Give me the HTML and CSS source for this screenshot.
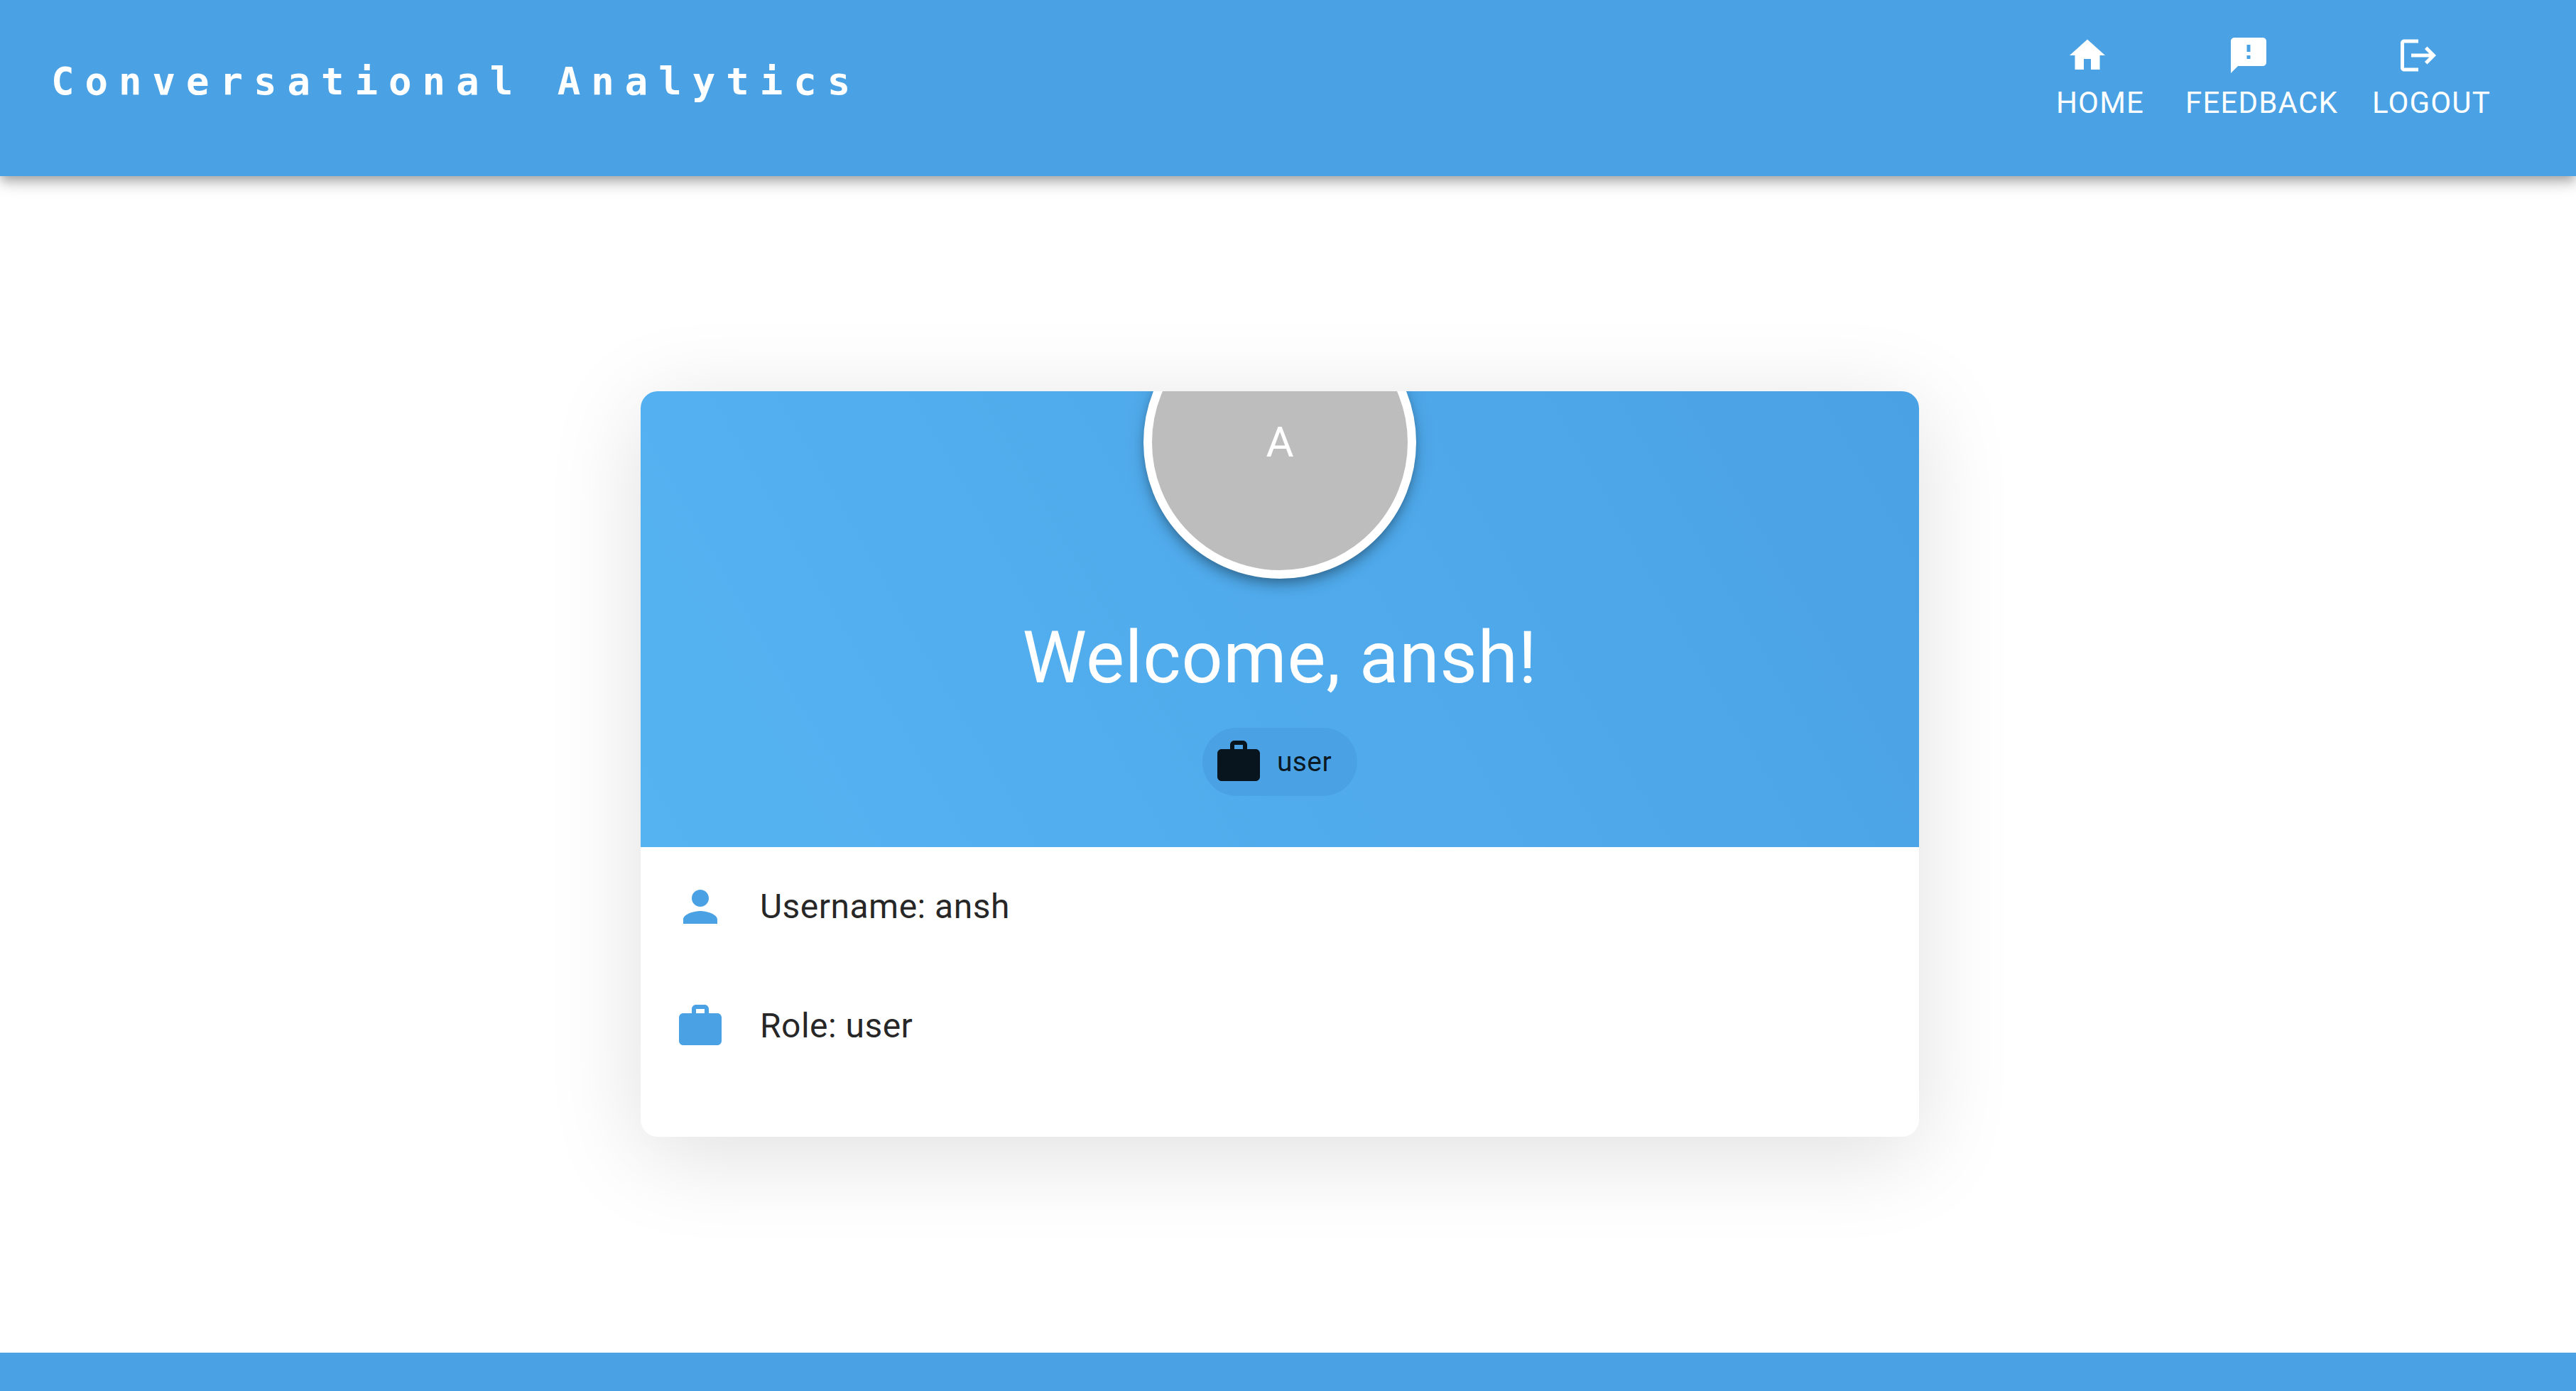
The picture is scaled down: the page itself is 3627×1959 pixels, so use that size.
FILE: index.html
```html
<!DOCTYPE html>
<html lang="en">
<head>
<meta charset="utf-8">
<meta name="viewport" content="width=device-width, initial-scale=1">
<title>Conversational Analytics</title>
<link rel="stylesheet" href="styles.css">
</head>
<body>
<header class="app-bar">
  <a class="brand" href="#">Conversational Analytics</a>
  <nav class="nav">
    <a class="nav-link" href="#home">
      <svg class="nav-icon" viewBox="0 0 24 24" aria-hidden="true"><path d="M10 20v-6h4v6h5v-8h3L12 3 2 12h3v8z"/></svg>
      Home
    </a>
    <a class="nav-link" href="#feedback">
      <svg class="nav-icon" viewBox="0 0 24 24" aria-hidden="true"><path d="M20 2H4c-1.1 0-1.990.9-1.990 2L2 22l4-4h14c1.100 0 2-.9 2-2V4c0-1.100-.9-2-2-2zm-7 12h-2v-2h2v2zm0-4h-2V6h2v4z"/></svg>
      Feedback
    </a>
    <button class="nav-link" type="button">
      <svg class="nav-icon" viewBox="0 0 24 24" aria-hidden="true"><path d="m17 7-1.410 1.410L18.170 11H8v2h10.170l-2.580 2.580L17 17l5-5zM4 5h8V3H4c-1.100 0-2 .9-2 2v14c0 1.100.9 2 2 2h8v-2H4V5z"/></svg>
      Logout
    </button>
  </nav>
</header>
<main class="main">
  <section class="card">
    <div class="card-header">
      <div class="avatar">A</div>
      <h1 class="welcome">Welcome, ansh!</h1>
      <div class="chip">
        <svg class="icon" viewBox="0 0 24 24" aria-hidden="true"><path d="M20 6h-4V4c0-1.110-.89-2-2-2h-4c-1.110 0-2 .89-2 2v2H4c-1.110 0-1.990.89-1.990 2L2 19c0 1.110.89 2 2 2h16c1.110 0 2-.89 2-2V8c0-1.110-.89-2-2-2zm-6 0h-4V4h4v2z"/></svg>
        <span class="chip-label">user</span>
      </div>
    </div>
    <ul class="details">
      <li class="detail">
        <svg class="icon" viewBox="0 0 24 24" aria-hidden="true"><path d="M12 12c2.210 0 4-1.790 4-4s-1.790-4-4-4-4 1.790-4 4 1.790 4 4 4zm0 2c-2.670 0-8 1.340-8 4v2h16v-2c0-2.660-5.330-4-8-4z"/></svg>
        <span>Username: ansh</span>
      </li>
      <li class="detail">
        <svg class="icon" viewBox="0 0 24 24" aria-hidden="true"><path d="M20 6h-4V4c0-1.110-.89-2-2-2h-4c-1.110 0-2 .89-2 2v2H4c-1.110 0-1.990.89-1.990 2L2 19c0 1.110.89 2 2 2h16c1.110 0 2-.89 2-2V8c0-1.110-.89-2-2-2zm-6 0h-4V4h4v2z"/></svg>
        <span>Role: user</span>
      </li>
    </ul>
  </section>
</main>
<footer class="footer"></footer>
</body>
</html>
```
FILE: styles.css
```css
:root {
  --primary: #4aa2e5;
  --primary-light: #56b3f2;
  --ink: rgba(0, 0, 0, 0.87);
  --shadow-raised:
    0 6px 12px -3px rgba(0, 0, 0, 0.2),
    0 12px 15px 0 rgba(0, 0, 0, 0.14),
    0 3px 30px 0 rgba(0, 0, 0, 0.12);
}

* {
  box-sizing: border-box;
}

body {
  display: flex;
  flex-direction: column;
  min-height: 100vh;
  margin: 0;
  background: #fff;
  color: var(--ink);
  font-family: Roboto, "Liberation Sans", sans-serif;
  font-size: 48px;
  line-height: 72px;
}

.app-bar {
  display: flex;
  align-items: center;
  justify-content: space-between;
  padding: 30px 96px 48px 72px;
  background: var(--primary);
  box-shadow: var(--shadow-raised);
}

.brand {
  color: #fff;
  font-family: "DejaVu Sans Mono", monospace;
  font-size: 54px;
  font-weight: 700;
  letter-spacing: 15px;
  text-decoration: none;
}

.nav {
  display: flex;
}

.nav-link {
  display: flex;
  flex-direction: column;
  align-items: center;
  min-width: 192px;
  padding: 18px 24px;
  border: 0;
  background: none;
  color: #fff;
  font: inherit;
  font-size: 42px;
  line-height: 74px;
  letter-spacing: 0.028em;
  text-decoration: none;
  text-transform: uppercase;
  cursor: pointer;
}

.nav-icon {
  width: 60px;
  height: 60px;
  margin: 0 24px 0 -12px;
  fill: currentColor;
}

.main {
  display: flex;
  flex: 1;
  align-items: center;
  justify-content: center;
  padding: 47px 23px 48px 0;
}

.card {
  width: 100%;
  max-width: 1800px;
  overflow: hidden;
  border-radius: 24px;
  background: #fff;
  box-shadow: 0 24px 132px rgba(0, 0, 0, 0.13);
}

.card-header {
  display: flex;
  flex-direction: column;
  align-items: center;
  padding-bottom: 72px;
  background: linear-gradient(60deg, var(--primary-light), var(--primary));
}

.avatar {
  display: flex;
  align-items: center;
  justify-content: center;
  width: 384px;
  height: 384px;
  margin-top: -120px;
  border: 12px solid #fff;
  border-radius: 50%;
  background: #bdbdbd;
  box-shadow: var(--shadow-raised);
  color: #fff;
  font-size: 60px;
}

.welcome {
  margin: 48px 0 36px;
  color: #fff;
  font-size: 102px;
  font-weight: 400;
  line-height: 126px;
  letter-spacing: 0.007em;
}

.chip {
  display: flex;
  align-items: center;
  gap: 18px;
  height: 96px;
  padding: 0 36px 0 15px;
  border-radius: 48px;
  background: var(--primary);
}

.chip-label {
  font-size: 39px;
  letter-spacing: 0.01em;
}

.icon {
  flex: none;
  width: 72px;
  height: 72px;
  fill: currentColor;
}

.details {
  margin: 0;
  padding: 0 0 72px;
  list-style: none;
}

.detail {
  display: flex;
  align-items: center;
  gap: 48px;
  padding: 48px;
  letter-spacing: 0.01em;
}

.detail .icon {
  color: var(--primary);
}

.footer {
  height: 54px;
  background: var(--primary);
}
```
